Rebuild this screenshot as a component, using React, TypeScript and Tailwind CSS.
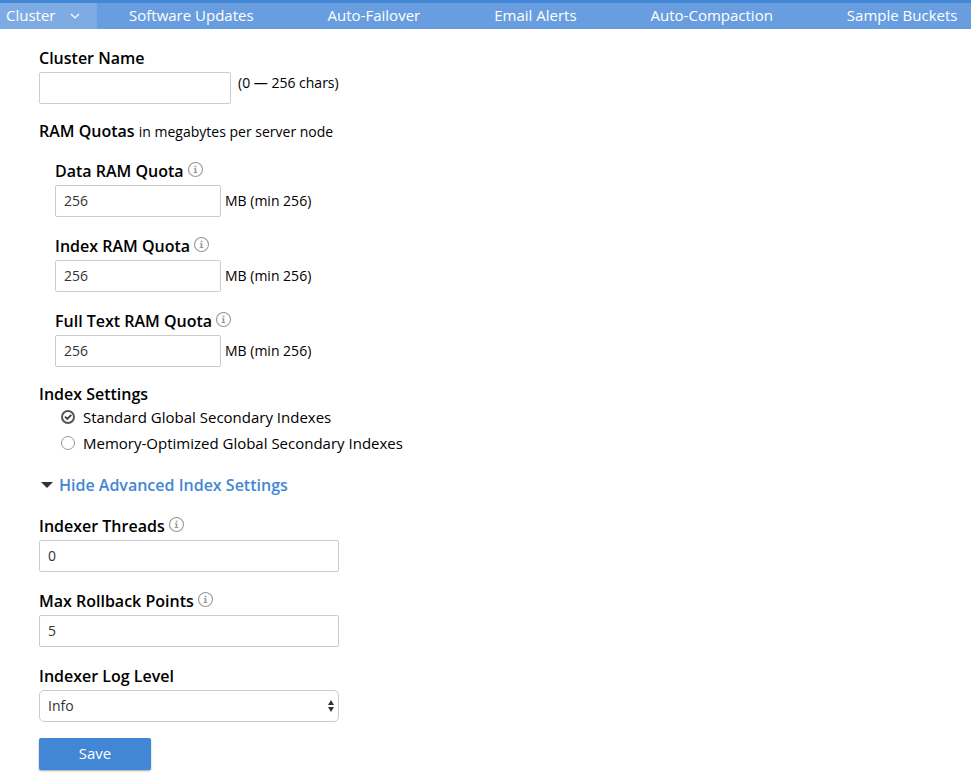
import { useState, type ReactNode } from "react";

const tabs = ["Software Updates", "Auto-Failover", "Email Alerts", "Auto-Compaction", "Sample Buckets"];

const inputClass =
  "h-8 rounded-xs border border-[#cccccc] bg-white px-2 pb-0.5 text-sm text-[#333333] outline-none focus:border-[#4287d6]";

function InfoIcon() {
  return (
    <svg className="mb-0.5 size-4 shrink-0" viewBox="0 0 16 16" fill="none" aria-hidden="true">
      <circle cx="7.5" cy="7.5" r="7" stroke="#999999" strokeWidth="1.1" />
      <path d="M6.7 3.7h1.7v1.6H6.7zM5.8 6.3h2.5v3.8h1v1H5.7v-1h1V7.2h-.9z" fill="#999999" />
    </svg>
  );
}

function FieldLabel({ id, info = false, children }: { id: string; info?: boolean; children: ReactNode }) {
  return (
    <div className="flex items-center gap-1">
      <label htmlFor={id} className="text-base leading-7 font-semibold">
        {children}
      </label>
      {info && <InfoIcon />}
    </div>
  );
}

function QuotaField({ id, label }: { id: string; label: string }) {
  return (
    <div>
      <FieldLabel id={id} info>
        {label}
      </FieldLabel>
      <div className="flex items-center gap-1">
        <input id={id} type="text" defaultValue="256" className={inputClass + " w-[166px]"} />
        <span className="text-sm">MB (min 256)</span>
      </div>
    </div>
  );
}

function RadioOption({
  label,
  checked,
  onSelect,
}: {
  label: string;
  checked: boolean;
  onSelect: () => void;
}) {
  return (
    <label className="flex h-[26px] items-center gap-2 text-[15px]">
      <span className="grid size-3.5 place-items-center">
        <input
          type="radio"
          name="index-storage"
          checked={checked}
          onChange={onSelect}
          className="col-start-1 row-start-1 size-3.5 appearance-none rounded-full border border-[#999999] bg-white checked:border-2 checked:border-[#555555]"
        />
        {checked && (
          <svg
            className="pointer-events-none col-start-1 row-start-1 size-3.5"
            viewBox="0 0 14 14"
            fill="none"
            aria-hidden="true"
          >
            <path d="M4 6.6l2.3 2.3 4-4" stroke="#444444" strokeWidth="2" />
          </svg>
        )}
      </span>
      {label}
    </label>
  );
}

export default function App() {
  const [storage, setStorage] = useState("standard");
  const [advanced, setAdvanced] = useState(true);

  return (
    <div className="font-['Open_Sans',sans-serif] text-black">
      <nav className="flex h-[29px] overflow-hidden border-t-3 border-[#4287d6] bg-[#689ee0] text-[15px] leading-6 whitespace-nowrap text-white">
        <a href="#cluster" className="flex w-[97px] shrink-0 bg-[#7eabe4] pl-1.5">
          Cluster
          <svg className="mt-[7px] ml-3.5 size-3" viewBox="0 0 12 12" fill="none" aria-hidden="true">
            <path d="M2 4l4 4 4-4" stroke="currentColor" strokeWidth="1.2" />
          </svg>
        </a>
        <div className="flex gap-2.5">
          {tabs.map((tab) => (
            <a key={tab} href="#settings" className="px-8">
              {tab}
            </a>
          ))}
        </div>
      </nav>

      <form className="px-[39px] pt-[15px] pb-2" onSubmit={(e) => e.preventDefault()}>
        <FieldLabel id="cluster-name">Cluster Name</FieldLabel>
        <div className="flex items-start gap-[7px]">
          <input id="cluster-name" type="text" className={inputClass + " w-48"} />
          <span className="text-sm leading-[22px]">(0 — 256 chars)</span>
        </div>

        <h2 className="mt-[13px] text-base leading-7 font-semibold">
          RAM Quotas <span className="text-sm font-normal">in megabytes per server node</span>
        </h2>
        <div className="mt-3 flex flex-col gap-[15px] pl-4">
          <QuotaField id="data-quota" label="Data RAM Quota" />
          <QuotaField id="index-quota" label="Index RAM Quota" />
          <QuotaField id="text-quota" label="Full Text RAM Quota" />
        </div>

        <fieldset className="mt-[17px]">
          <legend className="text-base leading-5 font-semibold">Index Settings</legend>
          <div className="pl-[22px]">
            <RadioOption
              label="Standard Global Secondary Indexes"
              checked={storage === "standard"}
              onSelect={() => setStorage("standard")}
            />
            <RadioOption
              label="Memory-Optimized Global Secondary Indexes"
              checked={storage === "memory"}
              onSelect={() => setStorage("memory")}
            />
          </div>
        </fieldset>

        <button
          type="button"
          onClick={() => setAdvanced(!advanced)}
          className="mt-[15px] flex items-center gap-1 text-base leading-7 font-semibold text-[#4287d6]"
        >
          <svg className="size-4" viewBox="0 0 16 16" aria-hidden="true">
            <path d="M2 5h12l-6 6z" fill="#333333" />
          </svg>
          {advanced ? "Hide" : "Show"} Advanced Index Settings
        </button>

        {advanced && (
          <div className="mt-[13px] flex max-w-[300px] flex-col gap-[15px]">
            <div>
              <FieldLabel id="threads" info>
                Indexer Threads
              </FieldLabel>
              <input id="threads" type="text" defaultValue="0" className={inputClass + " block w-full"} />
            </div>
            <div>
              <FieldLabel id="rollback" info>
                Max Rollback Points
              </FieldLabel>
              <input id="rollback" type="text" defaultValue="5" className={inputClass + " block w-full"} />
            </div>
            <div>
              <FieldLabel id="log-level">Indexer Log Level</FieldLabel>
              <div className="grid">
                <select
                  id="log-level"
                  defaultValue="Info"
                  className="col-start-1 row-start-1 h-8 w-full appearance-none rounded-[5px] border border-[#cccccc] bg-white px-2 text-sm text-[#333333]"
                >
                  <option>Info</option>
                  <option>Debug</option>
                  <option>Warn</option>
                </select>
                <svg
                  className="pointer-events-none col-start-1 row-start-1 mr-1 h-3.5 w-2 self-center justify-self-end"
                  viewBox="0 0 8 14"
                  aria-hidden="true"
                >
                  <path d="M1 6l3-5 3 5zM1 8h6l-3 5z" fill="#333333" />
                </svg>
              </div>
            </div>
          </div>
        )}

        <button
          type="submit"
          className="mt-4 h-8 w-28 rounded-xs bg-[#4287d6] pb-0.5 text-[15px] text-white shadow-[0_1px_2px_rgba(0,0,0,0.35)]"
        >
          Save
        </button>
      </form>
    </div>
  );
}
